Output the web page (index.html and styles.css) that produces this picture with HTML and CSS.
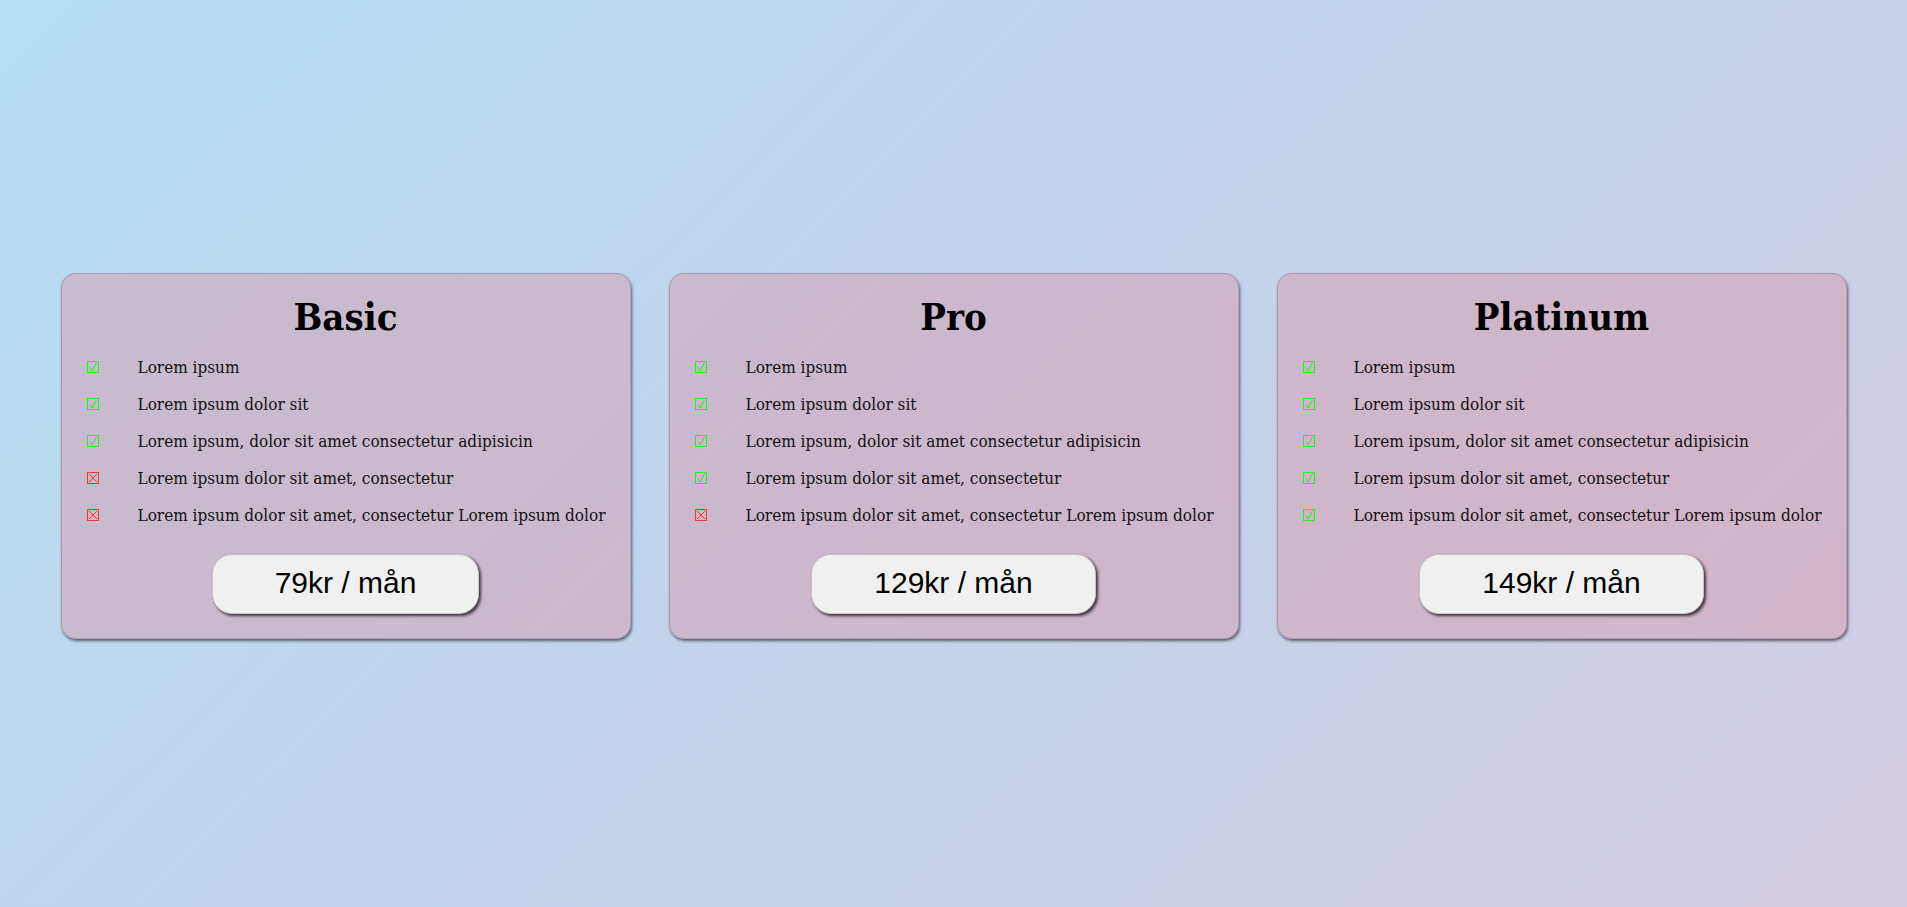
FILE: index.html
```html
<!DOCTYPE html>
<html lang="sv">
<head>
<meta charset="utf-8">
<title>Priser</title>
<link rel="stylesheet" href="styles.css">
</head>
<body>
<main class="plans">
  <section class="card">
    <h2 class="card-title">Basic</h2>
    <ul class="features">
      <li class="feature"><svg class="ico yes" viewBox="0 0 12 12"><rect x="0.5" y="0.5" width="11" height="11"/><path d="M3 6.5 L5 10 L9.5 2"/></svg><span>Lorem ipsum</span></li>
      <li class="feature"><svg class="ico yes" viewBox="0 0 12 12"><rect x="0.5" y="0.5" width="11" height="11"/><path d="M3 6.5 L5 10 L9.5 2"/></svg><span>Lorem ipsum dolor sit</span></li>
      <li class="feature"><svg class="ico yes" viewBox="0 0 12 12"><rect x="0.5" y="0.5" width="11" height="11"/><path d="M3 6.5 L5 10 L9.5 2"/></svg><span>Lorem ipsum, dolor sit amet consectetur adipisicin</span></li>
      <li class="feature"><svg class="ico no" viewBox="0 0 12 12"><rect x="0.5" y="0.5" width="11" height="11"/><path d="M2 2 L10 10 M10 2 L2 10"/></svg><span>Lorem ipsum dolor sit amet, consectetur</span></li>
      <li class="feature"><svg class="ico no" viewBox="0 0 12 12"><rect x="0.5" y="0.5" width="11" height="11"/><path d="M2 2 L10 10 M10 2 L2 10"/></svg><span>Lorem ipsum dolor sit amet, consectetur Lorem ipsum dolor</span></li>
    </ul>
    <button class="price">79kr / mån</button>
  </section>
  <section class="card">
    <h2 class="card-title">Pro</h2>
    <ul class="features">
      <li class="feature"><svg class="ico yes" viewBox="0 0 12 12"><rect x="0.5" y="0.5" width="11" height="11"/><path d="M3 6.5 L5 10 L9.5 2"/></svg><span>Lorem ipsum</span></li>
      <li class="feature"><svg class="ico yes" viewBox="0 0 12 12"><rect x="0.5" y="0.5" width="11" height="11"/><path d="M3 6.5 L5 10 L9.5 2"/></svg><span>Lorem ipsum dolor sit</span></li>
      <li class="feature"><svg class="ico yes" viewBox="0 0 12 12"><rect x="0.5" y="0.5" width="11" height="11"/><path d="M3 6.5 L5 10 L9.5 2"/></svg><span>Lorem ipsum, dolor sit amet consectetur adipisicin</span></li>
      <li class="feature"><svg class="ico yes" viewBox="0 0 12 12"><rect x="0.5" y="0.5" width="11" height="11"/><path d="M3 6.5 L5 10 L9.5 2"/></svg><span>Lorem ipsum dolor sit amet, consectetur</span></li>
      <li class="feature"><svg class="ico no" viewBox="0 0 12 12"><rect x="0.5" y="0.5" width="11" height="11"/><path d="M2 2 L10 10 M10 2 L2 10"/></svg><span>Lorem ipsum dolor sit amet, consectetur Lorem ipsum dolor</span></li>
    </ul>
    <button class="price">129kr / mån</button>
  </section>
  <section class="card">
    <h2 class="card-title">Platinum</h2>
    <ul class="features">
      <li class="feature"><svg class="ico yes" viewBox="0 0 12 12"><rect x="0.5" y="0.5" width="11" height="11"/><path d="M3 6.5 L5 10 L9.5 2"/></svg><span>Lorem ipsum</span></li>
      <li class="feature"><svg class="ico yes" viewBox="0 0 12 12"><rect x="0.5" y="0.5" width="11" height="11"/><path d="M3 6.5 L5 10 L9.5 2"/></svg><span>Lorem ipsum dolor sit</span></li>
      <li class="feature"><svg class="ico yes" viewBox="0 0 12 12"><rect x="0.5" y="0.5" width="11" height="11"/><path d="M3 6.5 L5 10 L9.5 2"/></svg><span>Lorem ipsum, dolor sit amet consectetur adipisicin</span></li>
      <li class="feature"><svg class="ico yes" viewBox="0 0 12 12"><rect x="0.5" y="0.5" width="11" height="11"/><path d="M3 6.5 L5 10 L9.5 2"/></svg><span>Lorem ipsum dolor sit amet, consectetur</span></li>
      <li class="feature"><svg class="ico yes" viewBox="0 0 12 12"><rect x="0.5" y="0.5" width="11" height="11"/><path d="M3 6.5 L5 10 L9.5 2"/></svg><span>Lorem ipsum dolor sit amet, consectetur Lorem ipsum dolor</span></li>
    </ul>
    <button class="price">149kr / mån</button>
  </section>
</main>
</body>
</html>
```
FILE: styles.css
```css
html, body {
  margin: 0;
  height: 100%;
}

body {
  background: linear-gradient(135deg, #b5ddf3 0%, #c2d3eb 50%, #d4cce3 100%);
  font-family: "DejaVu Serif Condensed", "DejaVu Serif", "Liberation Serif", serif;
  color: #111;
}

.plans {
  box-sizing: border-box;
  height: 100%;
  padding-top: 5px;
  display: flex;
  align-items: center;
  justify-content: center;
  gap: 38px;
}

.card {
  box-sizing: border-box;
  width: 570px;
  padding: 20px 0 24px 25px;
  border: 1px solid rgba(60, 60, 80, 0.22);
  border-radius: 15px;
  background: rgba(216, 154, 170, 0.48);
  box-shadow: 1px 2px 3px rgba(0, 0, 0, 0.55);
  display: flex;
  flex-direction: column;
}

.card-title {
  margin: 0 25px 16px 0;
  text-align: center;
  font-size: 38px;
  line-height: 46px;
  font-weight: bold;
  color: #000;
}

.features {
  list-style: none;
  margin: 0 0 28px;
  padding: 0;
  display: flex;
  flex-direction: column;
  gap: 15.2px;
}

.feature {
  display: flex;
  align-items: center;
  height: 22px;
  font-size: 17px;
  line-height: 22px;
  white-space: nowrap;
}

.ico {
  width: 12px;
  height: 12px;
  flex: none;
  margin-right: 39px;
  fill: none;
  stroke-width: 1;
}

.ico.yes { stroke: #22f022; }
.ico.no { stroke: #ff3030; }

.price {
  align-self: center;
  margin-left: -25px;
  box-sizing: border-box;
  height: 60px;
  padding: 11px 62px 13px;
  border: 1px solid #c4c4c4;
  border-radius: 20px;
  background: #f0f0f0;
  box-shadow: 2px 2px 3px rgba(0, 0, 0, 0.7);
  font-family: "Liberation Sans", Arial, sans-serif;
  font-size: 30px;
  line-height: 34px;
  color: #000;
}
```
